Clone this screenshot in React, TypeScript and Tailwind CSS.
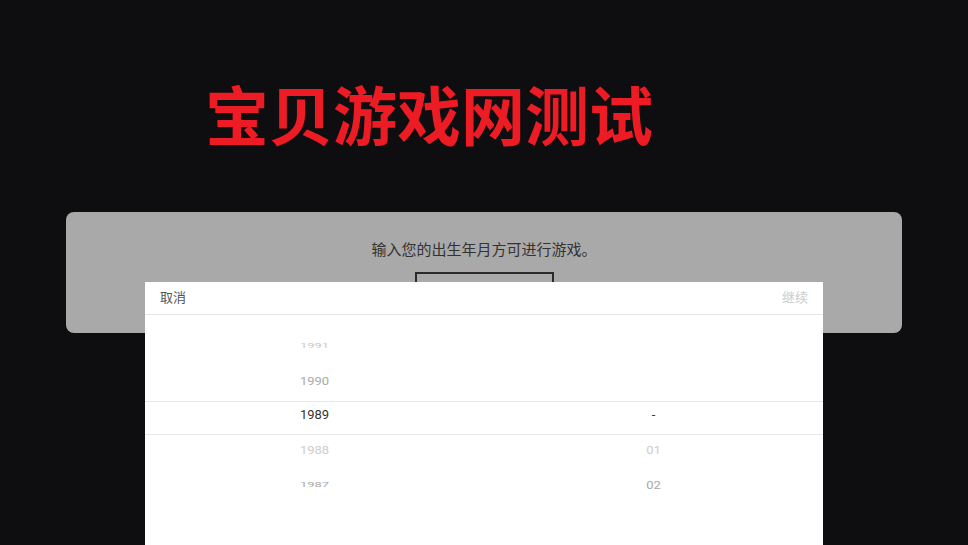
import React from "react";

const years = [
  { label: "1991", cls: "text-[#c8c8c8] scale-y-[0.6]" },
  { label: "1990", cls: "text-[#a8a8a8] scale-y-[0.9]" },
  { label: "1989", cls: "text-[#333333]" },
  { label: "1988", cls: "text-[#cccccc] scale-y-[0.9]" },
  { label: "1987", cls: "text-[#a8a8a8] scale-y-[0.6]" },
];

const months = [
  { label: "", cls: "" },
  { label: "", cls: "" },
  { label: "-", cls: "text-[#333333]" },
  { label: "01", cls: "text-[#cccccc] scale-y-[0.9]" },
  { label: "02", cls: "text-[#a8a8a8] scale-y-[0.9]" },
];

const cjk = "font-['Roboto','Noto_Sans_CJK_SC',sans-serif]";

function Column({ items }: { items: { label: string; cls: string }[] }) {
  return (
    <div className="flex-1 flex flex-col pt-[13px]">
      {items.map((it, i) => (
        <div key={i} className="h-[34.75px] flex items-center justify-center">
          <span className={`inline-block text-[13px] leading-none ${it.cls}`}>{it.label}</span>
        </div>
      ))}
    </div>
  );
}

export default function App() {
  return (
    <div className={`relative w-full h-[545px] overflow-hidden bg-[#0e0e10] ${cjk}`}>
      {/* title */}
      <div className="pt-[76px] pl-[205px] h-[212px]">
        <h1 className="text-[64px] leading-[72px] font-bold text-[#ed1c24] font-['Noto_Sans_CJK_SC',sans-serif]">
          宝贝游戏网测试
        </h1>
      </div>

      {/* age check card */}
      <div className="mx-[66px] h-[121px] rounded-lg bg-[#a9a9aa] flex flex-col items-center pt-[28px]">
        <p className="text-[15px] leading-5 text-[#333333]">输入您的出生年月方可进行游戏。</p>
        <div className="mt-3 w-[139px] h-[40px] border-2 border-[#2a2a2a] flex items-center justify-center text-[14px] text-[#555]">
          选择
        </div>
      </div>

      {/* date picker sheet */}
      <div className="absolute left-[145px] top-[282px] w-[678px] h-[300px] bg-white">
        <div className="h-[33px] px-[15px] flex items-center justify-between border-b border-[#e5e5e5] text-[13px]">
          <span className="text-[#555555]">取消</span>
          <span className="text-[#cccccc]">继续</span>
        </div>
        <div className="relative flex">
          <Column items={years} />
          <Column items={months} />
          <div className="absolute left-0 right-0 top-[86px] h-[34px] border-y border-[#e8e8e8] pointer-events-none" />
        </div>
      </div>
    </div>
  );
}
